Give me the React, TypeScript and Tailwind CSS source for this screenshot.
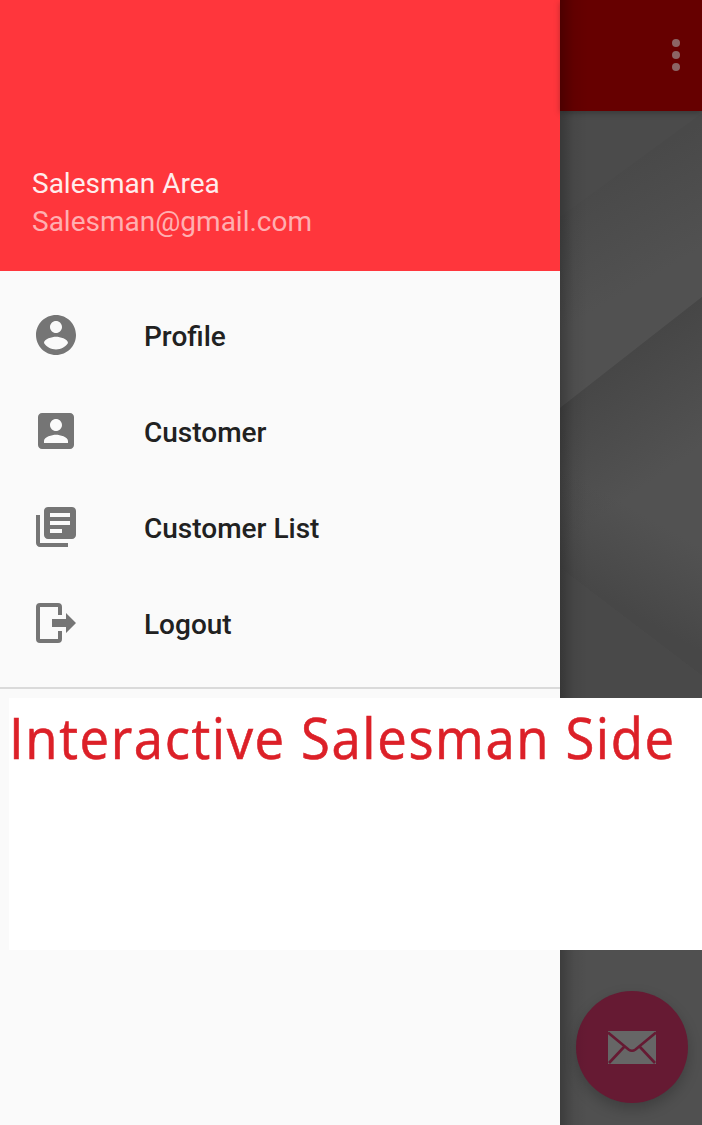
import type { ReactNode } from "react";

type Item = { label: string; icon: ReactNode };

const items: Item[] = [
  {
    label: "Profile",
    icon: (
      <path d="M12 2C6.48 2 2 6.48 2 12s4.48 10 10 10 10-4.48 10-10S17.52 2 12 2zm0 3c1.66 0 3 1.34 3 3s-1.34 3-3 3-3-1.34-3-3 1.34-3 3-3zm0 14.2c-2.5 0-4.71-1.28-6-3.22.03-1.99 4-3.08 6-3.08 1.99 0 5.97 1.09 6 3.08-1.29 1.94-3.5 3.22-6 3.22z" />
    ),
  },
  {
    label: "Customer",
    icon: (
      <path d="M3 5v14c0 1.1.89 2 2 2h14c1.1 0 2-.9 2-2V5c0-1.1-.9-2-2-2H5c-1.11 0-2 .9-2 2zm12 4c0 1.66-1.34 3-3 3s-3-1.34-3-3 1.34-3 3-3 3 1.34 3 3zm-9 8c0-2 4-3.1 6-3.1s6 1.1 6 3.1v1H6v-1z" />
    ),
  },
  {
    label: "Customer List",
    icon: (
      <path d="M4 6H2v14c0 1.1.9 2 2 2h14v-2H4V6zm16-4H8c-1.1 0-2 .9-2 2v12c0 1.1.9 2 2 2h12c1.1 0 2-.9 2-2V4c0-1.1-.9-2-2-2zm-1 9H9V9h10v2zm-4 4H9v-2h6v2zm4-8H9V5h10v2z" />
    ),
  },
  {
    label: "Logout",
    icon: (
      <>
        <path d="M14 8V4a1 1 0 0 0-1-1H4a1 1 0 0 0-1 1v16a1 1 0 0 0 1 1h9a1 1 0 0 0 1-1v-4" fill="none" stroke="currentColor" strokeWidth="2" />
        <path d="M10 10h7V7l5 5-5 5v-3h-7z" />
      </>
    ),
  },
];

function Backdrop() {
  return (
    <svg className="absolute inset-0 h-full w-full" viewBox="0 0 142 1014" preserveAspectRatio="none">
      <defs>
        <linearGradient id="upper" gradientUnits="userSpaceOnUse" x1="65" y1="55" x2="120" y2="150">
          <stop offset="0" stopColor="#494949" />
          <stop offset="1" stopColor="#515151" />
        </linearGradient>
        <linearGradient id="middle" gradientUnits="userSpaceOnUse" x1="65" y1="240" x2="135" y2="340">
          <stop offset="0" stopColor="#464646" />
          <stop offset="1" stopColor="#525252" />
        </linearGradient>
        <linearGradient id="middleFade" gradientUnits="userSpaceOnUse" x1="95" y1="410" x2="50" y2="490">
          <stop offset="0" stopColor="#484848" stopOpacity="0" />
          <stop offset="1" stopColor="#474747" />
        </linearGradient>
      </defs>
      <rect width="142" height="1014" fill="#4b4b4b" />
      <path d="M0 106L142 2V186L0 297z" fill="url(#upper)" />
      <path d="M0 297L142 186V565L0 457z" fill="url(#middle)" />
      <path d="M0 297L142 186V565L0 457z" fill="url(#middleFade)" />
      <path d="M0 457L142 565V700H0z" fill="#494949" />
      <path d="M0 800H142V1014H0z" fill="#505050" />
    </svg>
  );
}

export default function App() {
  return (
    <div className="relative flex h-[1125px] w-[702px] overflow-hidden bg-[#4b4b4b] font-[Roboto,sans-serif]">
      <aside className="flex w-[560px] shrink-0 flex-col bg-[#fafafa]">
        <header className="flex h-[271px] flex-col justify-end bg-[#ff363c] pb-[30px] pl-8 text-[28px] leading-[38px]">
          <div className="text-[#ffecec]">Salesman Area</div>
          <div className="text-[#ffafb1]">Salesman@gmail.com</div>
        </header>
        <nav className="flex h-[418px] flex-col border-b-2 border-[#dadada] pt-4">
          {items.map((item) => (
            <a key={item.label} className="flex h-24 shrink-0 items-center pl-8">
              <svg viewBox="0 0 24 24" className="h-12 w-12 text-[#757575]" fill="currentColor">
                {item.icon}
              </svg>
              <span className="ml-16 pt-1 text-[28px] leading-8 font-medium text-[#212121]">{item.label}</span>
            </a>
          ))}
        </nav>
      </aside>

      <main className="relative flex w-[142px] flex-col">
        <div className="z-10 flex h-[111px] items-center justify-end bg-[#660000] pr-[22px] pb-0.5 shadow-[0_2px_6px_rgba(0,0,0,0.25)]">
          <div className="flex flex-col gap-1">
            <i className="h-2 w-2 rounded-full bg-[#8c6565]" />
            <i className="h-2 w-2 rounded-full bg-[#8c6565]" />
            <i className="h-2 w-2 rounded-full bg-[#8c6565]" />
          </div>
        </div>
        <div className="relative flex flex-1 items-end pb-[22px] pl-4">
          <Backdrop />
          <button className="relative flex h-28 w-28 items-center justify-center rounded-full bg-[#661a33] shadow-[0_6px_14px_rgba(0,0,0,0.22)]">
            <svg viewBox="0 0 48 33" className="h-[33px] w-12">
              <rect width="48" height="33" fill="#666666" />
              <path d="M0 1.5L20.5 18.5Q24 21 27.5 18.5L48 1.5M1 32L16 16M47 32L32 16" fill="none" stroke="#661a33" strokeWidth="2.6" />
            </svg>
          </button>
        </div>
        <div className="pointer-events-none absolute inset-y-0 left-0 z-20 w-7 bg-linear-to-r from-black/25 via-black/5 to-transparent" />
      </main>

      <section className="absolute top-[698px] left-[9px] z-30 h-[252px] w-[693px] bg-white">
        <h1 className="w-max origin-left scale-x-[0.94] pt-px font-['Open_Sans',sans-serif] text-[56px] leading-[76px] tracking-[1.7px] whitespace-nowrap text-[#dc2028] [-webkit-text-stroke:0.6px_#dc2028]">
          Interactive Salesman Side
        </h1>
      </section>
    </div>
  );
}
